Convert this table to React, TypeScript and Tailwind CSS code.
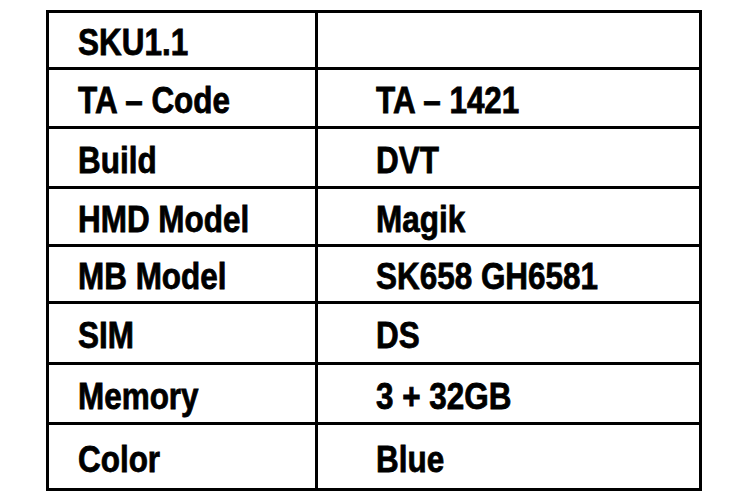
import React from 'react';

const rows: { label: string; value: string; h: string }[] = [
  { label: 'SKU1.1', value: '', h: 'h-[54px]' },
  { label: 'TA – Code', value: 'TA – 1421', h: 'h-[59px]' },
  { label: 'Build', value: 'DVT', h: 'h-[60px]' },
  { label: 'HMD Model', value: 'Magik', h: 'h-[58px]' },
  { label: 'MB Model', value: 'SK658 GH6581', h: 'h-[57px]' },
  { label: 'SIM', value: 'DS', h: 'h-[61px]' },
  { label: 'Memory', value: '3 + 32GB', h: 'h-[60px]' },
  { label: 'Color', value: 'Blue', h: 'h-[66px]' },
];

function Cell({ text }: { text: string }) {
  return (
    <span className="inline-block whitespace-nowrap origin-left scale-x-[0.85] [-webkit-text-stroke:0.8px_black]">
      {text}
    </span>
  );
}

export default function App() {
  return (
    <div className="w-[750px] h-[500px] bg-white pt-[10px] pl-[46px]">
      <div
        className="w-[656px] border-[3px] border-black text-black font-bold text-[37px] leading-none"
        style={{ fontFamily: '"Liberation Sans", Arial, sans-serif' }}
      >
        {rows.map((r, i) => (
          <div key={r.label} className={`flex ${r.h} ${i > 0 ? 'border-t-[3px] border-black' : ''}`}>
            <div className="w-[269px] border-r-[3px] border-black flex items-center pl-[29px] pt-[5px]">
              <Cell text={r.label} />
            </div>
            <div className="flex-1 flex items-center pl-[58px] pt-[5px]">
              <Cell text={r.value} />
            </div>
          </div>
        ))}
      </div>
    </div>
  );
}
